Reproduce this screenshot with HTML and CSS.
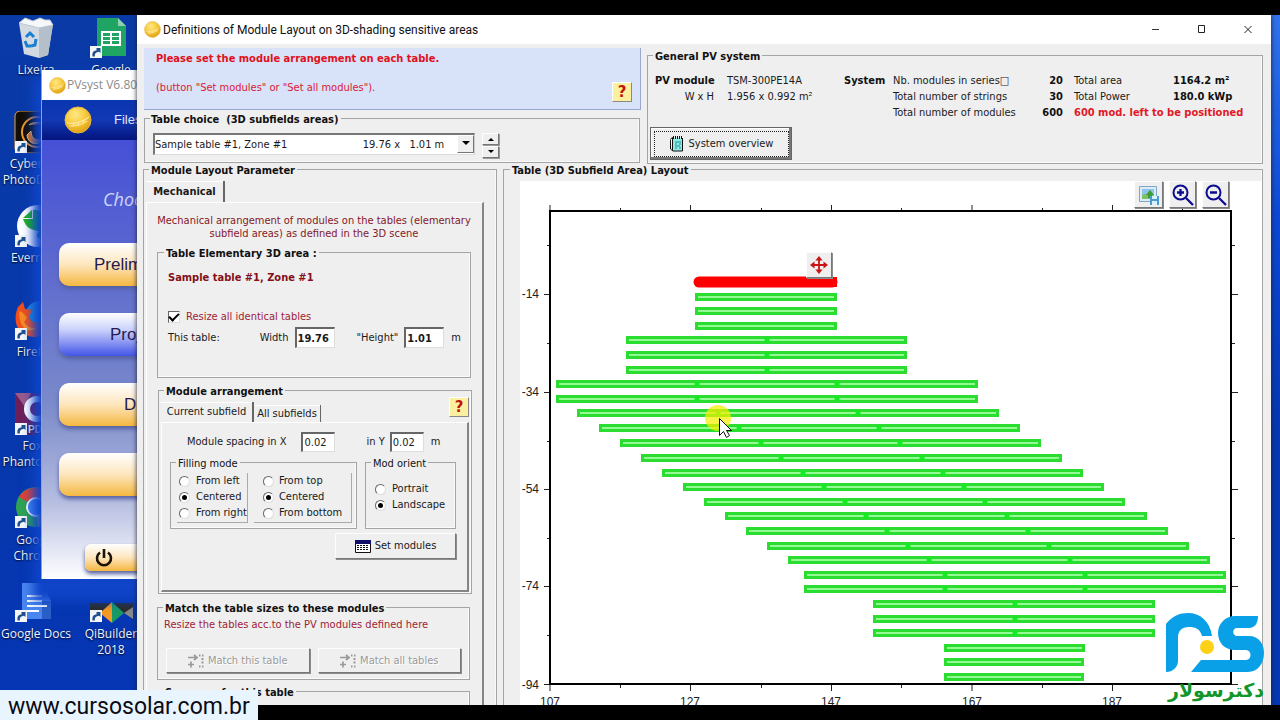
FILE: index.html
```html
<!DOCTYPE html>
<html lang="en">
<head>
<meta charset="utf-8">
<title>Definitions of Module Layout</title>
<link rel="stylesheet" href="styles.css">
</head>
<body>
<svg class="defs" width="0" height="0" aria-hidden="true">
  <defs>
    <radialGradient id="gold" cx="40%" cy="30%" r="75%">
      <stop offset="0" stop-color="#ffe98a"/><stop offset=".5" stop-color="#f9cb3c"/><stop offset="1" stop-color="#dc9a10"/>
    </radialGradient>
    <symbol id="sun" viewBox="0 0 28 28">
      <circle cx="14" cy="14" r="13" fill="url(#gold)" stroke="#e6b840"/>
      <path d="M3 17c8 1 16-1 22-6M5 20c6 0 13-1 18-5M9 21l1-5M14 20l1-5M19 18l1-5" fill="none" stroke="#fff4c4" stroke-width="1.200" opacity=".7"/>
    </symbol>
    <symbol id="shortcut" viewBox="0 0 12 12">
      <path d="M0 0h12v12H0z" fill="#f4f6fa"/>
      <path d="M2.500 10.500c-.5-4 1-6 4-6V2h4v5L9 5.800C6 6 4.500 7.500 4.800 10.500z" fill="#1f4f8c"/>
    </symbol>
    <symbol id="match" viewBox="0 0 16 14">
      <path d="M0 3.500h9M6 1l3 2.500L6 6M0 10.500h6M3 7.500v6" fill="none" stroke="#9a9a9a" stroke-width="1.700"/>
      <path d="M11 1.500h1.500M14 1.500h1.500M14.500 4v2M14.500 7.500v2M11 12.500h1.500M14 12.500h1.500" fill="none" stroke="#9a9a9a" stroke-width="2"/>
    </symbol>
  </defs>
</svg>
<div class="bar"></div>
<div class="desktop">
  <div class="icons">
    <div class="icon"><svg viewBox="0 0 44 42"><path d="M5 6l34 1-5 31-9 3-15-4z" fill="#d3dae1"/><path d="M25 9l14-2-5 31-9 3z" fill="#b4bfca"/><path d="M5 6l6-5 8 3 7-3 5 2 5 0 3 5-14 3z" fill="#f5f7f9" stroke="#bcc6d0"/><path d="M12 20l4-4 4 4M11 24l2 5h4M22 22l-1 6-4 1" fill="none" stroke="#1a7fd0" stroke-width="3"/></svg><span>Lixeira</span></div>
    <div class="icon"><svg viewBox="0 0 44 42"><path d="M8 1h21l8 8v30H8z" fill="#1fa463"/><path d="M29 1l8 8h-8z" fill="#8ed1b1"/><path d="M12 14h20v15H12z" fill="#fff"/><path d="M14 16h7v3h-7zM23 16h7v3h-7zM14 20h7v3h-7zM23 20h7v3h-7zM14 24h7v3h-7zM23 24h7v3h-7z" fill="#1fa463"/><use href="#shortcut" x="1" y="29" width="12" height="12"/></svg><span>Google</span></div>
    <div class="icon"><svg viewBox="0 0 44 42"><rect x="1" y="0" width="42" height="42" rx="5" fill="#140e08" stroke="#f2a32c"/><circle cx="23" cy="21" r="15" fill="none" stroke="#f39a2b" stroke-width="2"/><path d="M15 14c6-5 14-1 14-1M17 20c0 9 8 11 12 7-2 8-15 8-16-3z" fill="#f07c1c" stroke="#ffd050"/><use href="#shortcut" x="1" y="30" width="12" height="12"/></svg><span>Cyberlink<br>PhotoDirect</span></div>
    <div class="icon"></div>
    <div class="icon"><svg viewBox="0 0 44 42"><circle cx="24" cy="21" r="21" fill="#fff"/><path d="M9 13l9-8v8zM19 5c4-1 7 1 8 3 8 0 9 4 8 14-1 9-5 11-9 11-5 0-3-7 0-6-2-2-10-1-14-7-2-3-3-6-3-6h10z" fill="#1fb21f"/><use href="#shortcut" x="1" y="30" width="12" height="12"/></svg><span>Evernote</span></div>
    <div class="icon"></div>
    <div class="icon"><svg viewBox="0 0 44 42"><circle cx="26" cy="17" r="15" fill="#1f8ee0"/><path d="M4 8l5-5 2 7 8 1-4 6c1 6 8 9 15 4l8 3c-4 12-16 17-26 12C0 31 0 17 4 8z" fill="#f0501c"/><path d="M5 12c4 1 6 4 8 7l-3 4c3 5 8 7 13 6-7 6-18 2-18-17z" fill="#fa8a22"/><use href="#shortcut" x="1" y="29" width="12" height="12"/></svg><span>Firefox</span></div>
    <div class="icon"></div>
    <div class="icon"><svg viewBox="0 0 44 42"><path d="M1 0h42v42H1z" fill="#6d1f5a"/><path d="M1 0h16l-6 14z" fill="#9b5a8c"/><circle cx="23" cy="16" r="10" fill="none" stroke="#fff" stroke-width="6"/><text x="14" y="40" class="pdf">PDF</text><use href="#shortcut" x="1" y="30" width="12" height="12"/></svg><span>Foxit<br>PhantomPD</span></div>
    <div class="icon"></div>
    <div class="icon"><svg viewBox="0 0 44 42"><circle cx="22" cy="20" r="20" fill="#2fa352"/><path d="M22 20L5 10a20 20 0 0 1 34 0z" fill="#de4236"/><path d="M22 20l17-10a20 20 0 0 1-15 30z" fill="#fcd53f"/><circle cx="22" cy="20" r="9" fill="#4387f5" stroke="#fff" stroke-width="2"/><use href="#shortcut" x="1" y="29" width="12" height="12"/></svg><span>Google<br>Chrome</span></div>
    <div class="icon"></div>
    <div class="icon"><svg viewBox="0 0 44 42"><path d="M8 2h20l9 18v18H8z" fill="#4a86f0"/><path d="M28 20h9v18h-9z" fill="#2a5fc6"/><path d="M13 15h15M13 20h15M13 25h20M13 30h12" stroke="#fff" stroke-width="2"/><use href="#shortcut" x="1" y="29" width="12" height="12"/></svg><span>Google Docs</span></div>
    <div class="icon"><svg viewBox="0 0 44 42"><path d="M1 22h43v10H1z" fill="#2a2c28"/><path d="M11 32l12-11v21z" fill="#f59a22"/><path d="M23 21l12 11-12 10z" fill="#179a66"/><path d="M35 32l9-6v12z" fill="#8a8a86"/><use href="#shortcut" x="1" y="29" width="12" height="12"/></svg><span>QiBuilder<br>2018</span></div>
  </div>

  <section class="pvsyst">
    <header class="pv-title"><svg width="17" height="17"><use href="#sun"/></svg>PVsyst V6.80</header>
    <nav class="pv-menu"><svg width="28" height="28"><use href="#sun"/></svg><span>Files</span></nav>
    <div class="pv-body">
      <p class="choose">Choose a section</p>
      <button class="pill">Preliminary design</button>
      <button class="pill blue">Project design</button>
      <button class="pill">Databases</button>
      <button class="pill">Tools</button>
      <button class="pill power" aria-label="Exit"><svg width="20" height="20" viewBox="0 0 20 20"><path d="M6 4.500a7 7 0 1 0 8 0M10 1v9" fill="none" stroke="#1c1208" stroke-width="2.600"/></svg></button>
    </div>
  </section>

  <main class="dialog">
    <header class="titlebar">
      <svg width="17" height="17"><use href="#sun"/></svg>
      <h1>Definitions of Module Layout on 3D-shading sensitive areas</h1>
      <div class="win-buttons">
        <button aria-label="Minimize"><svg width="10" height="10"><path d="M1 5.500h7" stroke="#333"/></svg></button>
        <button aria-label="Maximize"><svg width="10" height="10"><path d="M1.500 1.500h6v7h-6z" fill="none" stroke="#222"/></svg></button>
        <button aria-label="Close"><svg width="10" height="10"><path d="M1.500 2l7 7M8.500 2l-7 7" stroke="#222"/></svg></button>
      </div>
    </header>

    <div class="top-row">
      <div class="top-left">
        <div class="message">
          <div><strong>Please set the module arrangement on each table.</strong><p>(button "Set modules" or "Set all modules").</p></div>
          <button class="help">?</button>
        </div>
        <fieldset class="choice">
          <legend>Table choice&nbsp; (3D subfields areas)</legend>
          <div class="choice-line">
            <div class="combo">
              <select aria-label="Table choice"><option>Sample table #1, Zone #1&nbsp;&nbsp;&nbsp;&nbsp;&nbsp;&nbsp;&nbsp;&nbsp;&nbsp;&nbsp;&nbsp;&nbsp;&nbsp;&nbsp;&nbsp;&nbsp;&nbsp;&nbsp;&nbsp;&nbsp;&nbsp;&nbsp;&nbsp;&nbsp;19.76 x&nbsp;&nbsp; 1.01 m</option></select>
              <svg class="combo-arrow" width="17" height="18"><path d="M4 5h8l-4 4z"/></svg>
            </div>
            <div class="spin">
              <button aria-label="Previous table"><svg width="8" height="4"><path d="M1 4h6L4 1z"/></svg></button>
              <button aria-label="Next table"><svg width="8" height="4"><path d="M1 0h6L4 3z"/></svg></button>
            </div>
          </div>
        </fieldset>
      </div>

      <fieldset class="general">
        <legend>General PV system</legend>
        <div class="facts">
          <b>PV module</b><span>TSM-300PE14A</span><b>System</b><span>Nb. modules in series&#9633;</span><b class="num">20</b><span>Total area</span><b>1164.2 m²</b>
          <span class="wh">W x H</span><span>1.956 x 0.992 m²</span><i></i><span>Total number of strings</span><b class="num">30</b><span>Total Power</span><b>180.0 kWp</b>
          <i></i><i></i><i></i><span>Total number of modules</span><b class="num">600</b><b class="alert">600 mod. left to be positioned</b>
        </div>
        <button class="btn overview"><span><svg width="15" height="17" viewBox="0 0 15 17"><path d="M4 3h9v13H4z" fill="#8feae4"/><path d="M1.500 4v10l2.500 2h9.500V3" fill="none" stroke="#111"/><path d="M1.500 4l2-1.500v13" fill="#fff" stroke="#111"/><path d="M4.500 1v3M6.500 1v3M8.500 1v3M10.500 1v3M12.500 1v3" stroke="#111"/><path d="M6 7h6M6 9h2M10 9h2M6 11h5M6 13h2M10 13h2" stroke="#1c8f9a"/></svg>System overview</span></button>
      </fieldset>
    </div>

    <div class="bottom-row">
      <fieldset class="params">
        <legend>Module Layout Parameter</legend>
        <button class="tab main-tab">Mechanical</button>
        <div class="page main-page">
          <p class="intro">Mechanical arrangement of modules on the tables (elementary<br>subfield areas) as defined in the 3D scene</p>

          <fieldset class="area">
            <legend>Table Elementary 3D area :</legend>
            <b class="maroon">Sample table #1, Zone #1</b>
            <label class="check"><input type="checkbox" checked>Resize all identical tables</label>
            <div class="size-line">
              <span class="this">This table:</span>
              <label for="w">Width</label><input id="w" class="field bold" value="19.76">
              <label for="h" class="h-label">"Height"</label><input id="h" class="field bold" value="1.01">
              <span>m</span>
            </div>
          </fieldset>

          <fieldset class="arrange">
            <legend>Module arrangement</legend>
            <div class="tabs">
              <button class="tab current">Current subfield</button><button class="tab other">All subfields</button>
              <button class="help">?</button>
            </div>
            <div class="page inner-page">
              <div class="spacing-line">
                <label for="sx">Module spacing in X</label><input id="sx" class="field" value="0.02">
                <label for="sy" class="y-label">in Y</label><input id="sy" class="field" value="0.02">
                <span>m</span>
              </div>
              <div class="modes">
                <fieldset class="filling">
                  <legend>Filling mode</legend>
                  <div class="wells">
                    <div class="well"><label><input type="radio" name="fx">From left</label><label><input type="radio" name="fx" checked>Centered</label><label><input type="radio" name="fx">From right</label></div>
                    <div class="well"><label><input type="radio" name="fy">From top</label><label><input type="radio" name="fy" checked>Centered</label><label><input type="radio" name="fy">From bottom</label></div>
                  </div>
                </fieldset>
                <fieldset class="orient">
                  <legend>Mod orient</legend>
                  <label><input type="radio" name="o">Portrait</label><label><input type="radio" name="o" checked>Landscape</label>
                </fieldset>
              </div>
              <button class="btn set"><svg width="16" height="13" viewBox="0 0 16 13"><path d="M.5.500h15v12H.5z" fill="#fff" stroke="#111"/><path d="M0 0h16v4H0z" fill="#10106a"/><path d="M2 5.500h12M2 7.500h12M2 9.500h12" stroke="#111" stroke-dasharray="2 1"/></svg>Set modules</button>
            </div>
          </fieldset>

          <fieldset class="match">
            <legend>Match the table sizes to these modules</legend>
            <p>Resize the tables acc.to the PV modules defined here</p>
            <div class="match-line">
              <button class="btn" disabled><svg width="16" height="14"><use href="#match"/></svg>Match this table</button>
              <button class="btn" disabled><svg width="16" height="14"><use href="#match"/></svg>Match all tables</button>
            </div>
          </fieldset>

          <fieldset class="summary"><legend>Summary for this table</legend></fieldset>
        </div>
      </fieldset>

      <fieldset class="layout">
        <legend>Table (3D Subfield Area) Layout</legend>
        <div class="canvas">
          <svg class="chart" viewBox="520 181 742 524" role="img" aria-label="Table layout">
            <path d="M550 205v6M690.500 205v6M831.500 205v6M972 205v6M1112.500 205v6M620.500 208v3M761.500 208v3M901.500 208v3M1042.500 208v3M1182.500 208v3M550 684v7M690.500 684v7M831.500 684v7M972 684v7M1112.500 684v7M620.500 684v4M761.500 684v4M901.500 684v4M1042.500 684v4M1182.500 684v4M544 294.500h6M544 392.500h6M544 489.500h6M544 586.500h6M544 684.500h6M547 245.500h3M547 343.500h3M547 441.500h3M547 538.500h3M547 635.500h3M1231 294.500h7M1231 392.500h7M1231 489.500h7M1231 586.500h7M1231 684.500h7M1231 245.500h4M1231 343.500h4M1231 441.500h4M1231 538.500h4M1231 635.500h4" stroke="#222"/>
            <path d="M550 211h681v473H550z" fill="none" stroke="#000" stroke-width="2"/>
            <g class="ylab"><text x="539" y="298">-14</text><text x="539" y="396">-34</text><text x="539" y="493">-54</text><text x="539" y="590">-74</text><text x="539" y="689">-94</text></g>
            <g class="xlab"><text x="550" y="706">107</text><text x="690" y="706">127</text><text x="831" y="706">147</text><text x="972" y="706">167</text><text x="1112" y="706">187</text></g>
            <defs>
              <path id="rows" d="M699 297h134M699 311h134M699 326h134M630 340h273M630 355h273M630 370h273M560 384h414M560 399h414M581 413h414M603 428h413M624 443h413M645 458h413M666 473h413M687 487h413M708 502h413M729 516h414M750 531h414M771 546h414M792 560h414M808 575h414M808 589h414M877 604h274M877 619h274M877 633h274M948 648h133M948 662h132M948 677h132"/>
            </defs>
            <use href="#rows" class="row-outer"/>
            <use href="#rows" class="row-inner"/>
            <path class="joint" d="M767 340h.1M767 355h.1M767 370h.1M697 384h.1M837 384h.1M697 399h.1M837 399h.1M718 413h.1M858 413h.1M739 428h.1M879 428h.1M761 443h.1M900 443h.1M781 458h.1M922 458h.1M803 473h.1M943 473h.1M824 487h.1M964 487h.1M845 502h.1M985 502h.1M866 516h.1M1007 516h.1M887 531h.1M1028 531h.1M908 546h.1M1049 546h.1M929 560h.1M1070 560h.1M945 575h.1M1085 575h.1M945 589h.1M1085 589h.1M1015 604h.1M1015 619h.1M1015 633h.1"/>
            <path d="M699 282h133" stroke="#fe0000" stroke-width="11" stroke-linecap="round"/><path d="M824 277h13v10h-13z" fill="#fe0000"/>
            <circle cx="718" cy="418" r="13" fill="#f4ee00" opacity=".72"/>
            <path d="M719.500 418.500v17l4-4 3 6 3-2-3-5h5z" fill="#fff" stroke="#111"/>
          </svg>
          <div class="tools">
            <button class="btn" aria-label="Save picture"><svg width="22" height="22" viewBox="0 0 22 22"><path d="M1.500 2.500h17v15h-17z" fill="#dcebf5" stroke="#7fa9c4"/><path d="M4 5h12v8H4z" fill="#8cc4ea"/><path d="M4 11c4-2 8-2 12 0v4H4z" fill="#7cc06a"/><path d="M12 6l4 5h-2v3h-4v-3H8z" fill="#3f9a38"/><path d="M12 12h9v9h-9z" fill="#4c9bd0"/><path d="M14 12h5v3h-5zM14 17h5v4h-5z" fill="#d8f0ff"/></svg></button>
            <button class="btn" aria-label="Zoom in"><svg width="22" height="22" viewBox="0 0 22 22"><circle cx="8.500" cy="8.500" r="7" fill="none" stroke="#0c0c90" stroke-width="2"/><path d="M5 8.500h7M8.500 5v7M14 14l7 7" stroke="#0c0c90" stroke-width="2.300"/></svg></button>
            <button class="btn" aria-label="Zoom out"><svg width="22" height="22" viewBox="0 0 22 22"><circle cx="8.500" cy="8.500" r="7" fill="none" stroke="#0c0c90" stroke-width="2"/><path d="M5 8.500h7M14 14l7 7" stroke="#0c0c90" stroke-width="2.300"/></svg></button>
          </div>
          <button class="btn move" aria-label="Move"><svg width="18" height="18" viewBox="0 0 20 20"><path d="M10 3v14M3 10h14" stroke="#c81414" stroke-width="2"/><path d="M10 0l4 5H6zM10 20l4-5H6zM0 10l5-4v8zM20 10l-5-4v8z" fill="#c81414"/></svg></button>
        </div>
      </fieldset>
    </div>
  </main>
</div>
<div class="bar"></div>

<div class="caption">www.cursosolar.com.br</div>
<div class="brand">
  <svg width="98" height="60" viewBox="0 0 98 60"><path d="M0 59V11C6 3 14 0 22 0c12 0 22 8 24 23h-10c-2-7-6-9-13-9-7 0-11 4-11 10v24c0 6-5 11-12 11z" fill="#0aa0e8"/><path d="M92 3c0 7-3 12-9 12H71c-5 0-5 8 0 8h12c10 0 15 8 15 17 0 10-6 19-16 19H25l10-12h45c6 0 6-10 0-10H69c-11 0-17-8-17-17S59 3 69 3z" fill="#0aa0e8"/><circle cx="41" cy="34" r="7" fill="#fcd116"/></svg>
  <span lang="fa" dir="rtl">دکترسولار</span>
</div>
</body>
</html>
```
FILE: styles.css
```css
* { box-sizing: border-box; }
body {
  margin: 0; height: 100vh; display: flex; flex-direction: column; overflow: hidden; position: relative;
  background: #000; color: #1a1a1a;
  font: 11px/14px "DejaVu Sans Condensed", "Open Sans", sans-serif;
}
button, input, select { font: inherit; color: inherit; margin: 0; padding: 0; }
p, h1 { margin: 0; font-weight: inherit; font-size: inherit; }
svg { display: block; flex: none; }
.defs { position: absolute; }
.bar { height: 15px; flex: none; background: #000; }
.desktop {
  flex: 1; min-height: 0; position: relative; overflow: hidden;
  background: linear-gradient(180deg, #2f74ee 0, #0a48d4 30%, #0437b4 60%);
}

/* desktop icons */
.icons {
  height: 100%; width: 150px; padding-top: 2px;
  display: grid; grid-template-columns: 72px 78px; grid-auto-rows: 94px;
  background: linear-gradient(180deg, #0a3aa6, #0738ac 60%, #0535b4);
}
.icon {
  display: flex; flex-direction: column; align-items: center; gap: 3px;
  color: #eef3ff; font: 12px/16px "Open Sans", sans-serif; text-align: center; white-space: nowrap; text-shadow: 0 1px 2px #001;
}
.icon svg { width: 44px; height: 42px; }
.pdf { font: bold 10px "Liberation Sans", sans-serif; fill: #fff; }

/* window behind */
.pvsyst {
  position: absolute; left: 41px; top: 55px; width: 400px; background: #fff;
  border-left: 1px solid #8e9fd8; box-shadow: 0 14px 10px 8px #0f44c8;
}
.pv-title {
  display: flex; align-items: center; gap: 1px; height: 30px; padding-left: 7px;
  color: #8b8b8b; font: 12px/18px "Open Sans", sans-serif;
}
.pv-menu {
  display: flex; align-items: center; gap: 22px; height: 40px; padding-left: 22px;
  background: linear-gradient(#0a35b0, #1238b4 50%, #02147e);
  color: #dfe6ff; font: 13px/18px "Liberation Sans", sans-serif;
}
.pv-body {
  display: flex; flex-direction: column; padding: 47px 0 8px 17px;
  background: linear-gradient(#4550d6, #5a66d0 25%, #7a8aca 60%, #b4bce0 82%, #fff);
}
.choose { padding-left: 44px; margin-bottom: 32px; color: #cdd6f6; font: italic 18px/24px "Open Sans", sans-serif; }
.pill {
  height: 43px; margin-bottom: 27px; padding-left: 35px; border: 0; border-radius: 10px; text-align: left;
  background: linear-gradient(#fff, #fde6bd 50%, #f5b740); box-shadow: 0 3px 4px #5560a0;
  color: #251a52; font: 17px/20px "Liberation Sans", sans-serif;
}
.pill.blue { padding-left: 51px; background: linear-gradient(#fff, #c9d0fb 40%, #4355e8); }
.pill.blue + .pill { padding-left: 65px; }
.pill.blue + .pill + .pill { padding-left: 90px; margin-bottom: 48px; }
.pill.power { height: 27px; margin: 0 0 0 26px; padding-left: 9px; border-radius: 6px; }

/* dialog */
.dialog {
  position: absolute; left: 137px; right: 9px; top: 0; bottom: 0; overflow: hidden;
  background: #efefef; box-shadow: 0 0 5px #223;
}
.titlebar { display: flex; align-items: center; gap: 2px; height: 29px; padding: 0 18px 0 7px; background: #fff; }
.titlebar h1 { flex: 1; color: #111; font: 12px/16px Roboto, sans-serif; }
.win-buttons { display: flex; gap: 36px; padding-bottom: 2px; }
.win-buttons button { border: 0; background: none; }

fieldset { min-width: 0; margin: 0; padding: 0; border: 1px solid #a4a4a4; box-shadow: inset -1px -1px #fafafa; }
legend { margin-left: 5px; padding: 3px 2px 0; font-weight: bold; line-height: 14px; color: #111; white-space: nowrap; }
.top-row { display: grid; grid-template-columns: 497px 1fr; gap: 6px; padding: 3px 8px 0 7px; }
.top-left { padding-top: 1px; }
.message {
  display: flex; justify-content: space-between; align-items: flex-end; height: 62px; padding: 2px 8px 7px 12px;
  background: #d8e2f8; border: solid #98a8cc; border-width: 0 1px 1px 0; color: #dd1834;
}
.message p { padding-top: 15px; }
.message > div { align-self: flex-start; padding-top: 2px; }
.message strong { color: #e01020; }
.help {
  width: 20px; height: 20px; border: 1px solid; border-color: #fff #888 #888 #fff; background: #fbf0a0;
  color: #c01808; font: bold 15px/16px "DejaVu Sans", sans-serif;
}
.choice { margin-right: 1px; }
.choice legend { padding-left: 1px; }
.choice-line { display: flex; gap: 7px; padding: 6px 0 4px 8px; }
.combo { position: relative; width: 322px; }
select {
  appearance: none; width: 100%; height: 22px; padding-left: 0; border: solid; border-width: 2px 1px 1px 2px;
  border-color: #777 #ccc #ddd #777; border-radius: 0; background: #fff;
}
.combo-arrow { position: absolute; right: 1px; top: 2px; background: #efefef; border: 1px solid; border-color: #fff #777 #777 #fff; }
.spin { display: grid; gap: 1px; }
.spin button {
  display: grid; place-items: center; width: 17px; height: 12px; background: #efefef;
  border: 1px solid; border-color: #fff #777 #777 #fff; box-shadow: 1px 1px #999;
}
.general { padding: 0 2px 3px; }
.general legend { margin-left: 3px; }
.facts {
  display: grid; grid-template-columns: 72px 117px 49px 125px 45px 110px 1fr; grid-auto-rows: 16px;
  padding: 9px 0 6px 5px; align-items: center; white-space: nowrap;
}
.facts b { color: #111; }
.facts .wh { text-align: right; padding-right: 13px; }
.facts .num { text-align: right; }
.facts .num + * { padding-left: 11px; }
.facts .alert { grid-column: 6 / 8; color: #e01828; }
.btn {
  display: flex; align-items: center; justify-content: center; gap: 4px; background: #efefef;
  border: 1px solid; border-color: #fdfdfd #777 #777 #fdfdfd; box-shadow: 1px 1px #8c8c8c; color: #1a1a1a;
}
.btn:disabled { color: #9a9a9a; text-shadow: 1px 1px #fff; }
.overview { width: 142px; height: 33px; border: 1px solid #666; box-shadow: inset -2px -2px #777, inset 1px 1px #fff; }
.overview span { display: flex; align-items: center; justify-content: center; gap: 5px; width: 135px; height: 26px; border: 1px dotted #222; }

.bottom-row { display: grid; grid-template-columns: 354px 1fr; gap: 6px; padding: 0 8px 0 6px; margin-top: -3px; }
.params { padding: 0 12px 0 2px; }
.params > legend { margin-left: 3px; }
.tab { border: solid #666; border-width: 0 2px 0 0; background: none; white-space: nowrap; box-shadow: inset 0 1px #fff; }
.main-tab { display: block; width: 79px; height: 21px; margin-top: 3px; font-weight: bold; }
.page { border: solid; border-color: #fff #858585 #858585 #fff; border-width: 1px 2px 2px 1px; }
.main-page { padding: 11px 11px 30px 10px; }
.intro { color: #841828; text-align: center; line-height: 13px; white-space: nowrap; display: flex; justify-content: center; }
.area { margin-top: 4px; padding: 10px 9px 29px 10px; }
.area legend { margin-left: -4px; }
.maroon { color: #841018; }
.check { display: flex; align-items: center; gap: 6px; margin-top: 25px; color: #a01c34; }
.size-line, .spacing-line { display: flex; align-items: center; }
.size-line { margin-top: 3px; }
.this { width: 95px; }
input[type=checkbox] {
  appearance: none; display: grid; justify-items: center; width: 12px; height: 12px; padding-top: 1px; background: #fff;
  border: 1px solid; border-color: #666 #ddd #ddd #666;
}
input[type=checkbox]:checked::after { content: ""; width: 8px; height: 4px; border: solid #000; border-width: 0 0 2px 2px; rotate: -45deg; }
.field {
  width: 40px; height: 21px; margin: 0 0 0 6px; padding-left: 1px; background: #fff; border-radius: 0;
  border: solid; border-width: 2px 1px 1px 2px; border-color: #666 #ddd #ddd #666;
}
.bold { font-weight: bold; }
.h-label { margin-left: 22px; }
.size-line span:last-child { margin-left: 7px; }
.spacing-line span { margin-left: 7px; }
.arrange { margin: 4px -1px 0 1px; padding: 2px 2px 1px; }
.arrange > legend { margin-left: 3px; }
.tabs { display: flex; align-items: flex-end; height: 21px; }
.current { width: 93px; height: 20px; }
.other { width: 67px; height: 17px; border-right-width: 1px; }
.tabs .help { margin: 0 0 5px auto; }
.inner-page { padding: 9px 11px 31px 8px; }
.spacing-line { padding-left: 17px; }
.spacing-line .field { width: 34px; height: 20px; }
.spacing-line label + .field { margin-left: 15px; }
.spacing-line .y-label { margin-left: 31px; }
.spacing-line .y-label + .field { margin-left: 5px; }
.modes { display: grid; grid-template-columns: 187fr 91fr; gap: 8px; margin-top: 2px; }
.modes legend { font-weight: normal; }
.modes fieldset { height: 75px; }
.orient { padding: 10px 0 0 9px; }
.orient legend { margin-left: -4px; }
.wells { display: flex; gap: 6px; padding: 2px 4px 0 6px; }
.well { flex: 74; padding: 0 0 1px 2px; border: solid #aaa; border-width: 0 1px 1px 0; }
.well + .well { flex: 96; padding-left: 9px; }
.modes label { display: flex; align-items: center; gap: 6px; height: 16px; white-space: nowrap; }
.well + .well label { gap: 5px; }
input[type=radio] {
  appearance: none; display: grid; place-items: center; width: 11px; height: 11px; border-radius: 50%; background: #fff;
  border: 1px solid; border-color: #666 #ddd #ddd #666; flex: none;
}
input[type=radio]:checked::after { content: ""; width: 5px; height: 5px; border-radius: 50%; background: #000; }
.set { width: 121px; height: 26px; margin: 4px 0 0 auto; }
.match { margin: 5px 1px 0 0; padding: 2px 8px 6px 6px; }
.match legend { margin-left: -1px; }
.match p { color: #a01c34; }
.match-line { display: flex; gap: 8px; margin: 16px 0 0 2px; }
.match-line .btn { flex: 1; height: 25px; }
.summary { margin: 3px 1px 0 0; height: 60px; }

.layout { padding: 0 0 0 16px; }
.layout legend { margin-left: -10px; }
.canvas { position: relative; margin-top: 3px; background: #fff; }
.chart { width: 100%; height: auto; overflow: hidden; }
.chart text { font: 12px "Liberation Sans", sans-serif; fill: #222; }
.ylab { text-anchor: end; }
.xlab { text-anchor: middle; }
.row-outer { stroke: #2bdd30; stroke-width: 8; stroke-linecap: square; fill: none; }
.row-inner { stroke: #93fb93; stroke-width: 2; stroke-linecap: square; fill: none; }
.joint { stroke: #12ec20; stroke-width: 5; stroke-linecap: round; fill: none; }
.tools { position: absolute; right: 33px; top: 0; display: flex; gap: 6px; }
.tools .btn { width: 27px; height: 27px; }
.tools .btn:first-child { width: 29px; }
.move { position: absolute; left: 38.500%; top: 71px; width: 26px; height: 26px; }

/* video overlays */
.caption {
  position: absolute; left: 0; bottom: 0; width: 258px; height: 30px; padding-left: 8px; background: #e8f5fe;
  color: #0b0b14; font: 23px/34px Roboto, sans-serif; white-space: nowrap;
}
.brand { position: absolute; right: 16px; bottom: 13px; width: 98px; }
.brand span { display: block; color: #12962c; font: bold 19px/34px "DejaVu Sans", sans-serif; white-space: nowrap; }
```
